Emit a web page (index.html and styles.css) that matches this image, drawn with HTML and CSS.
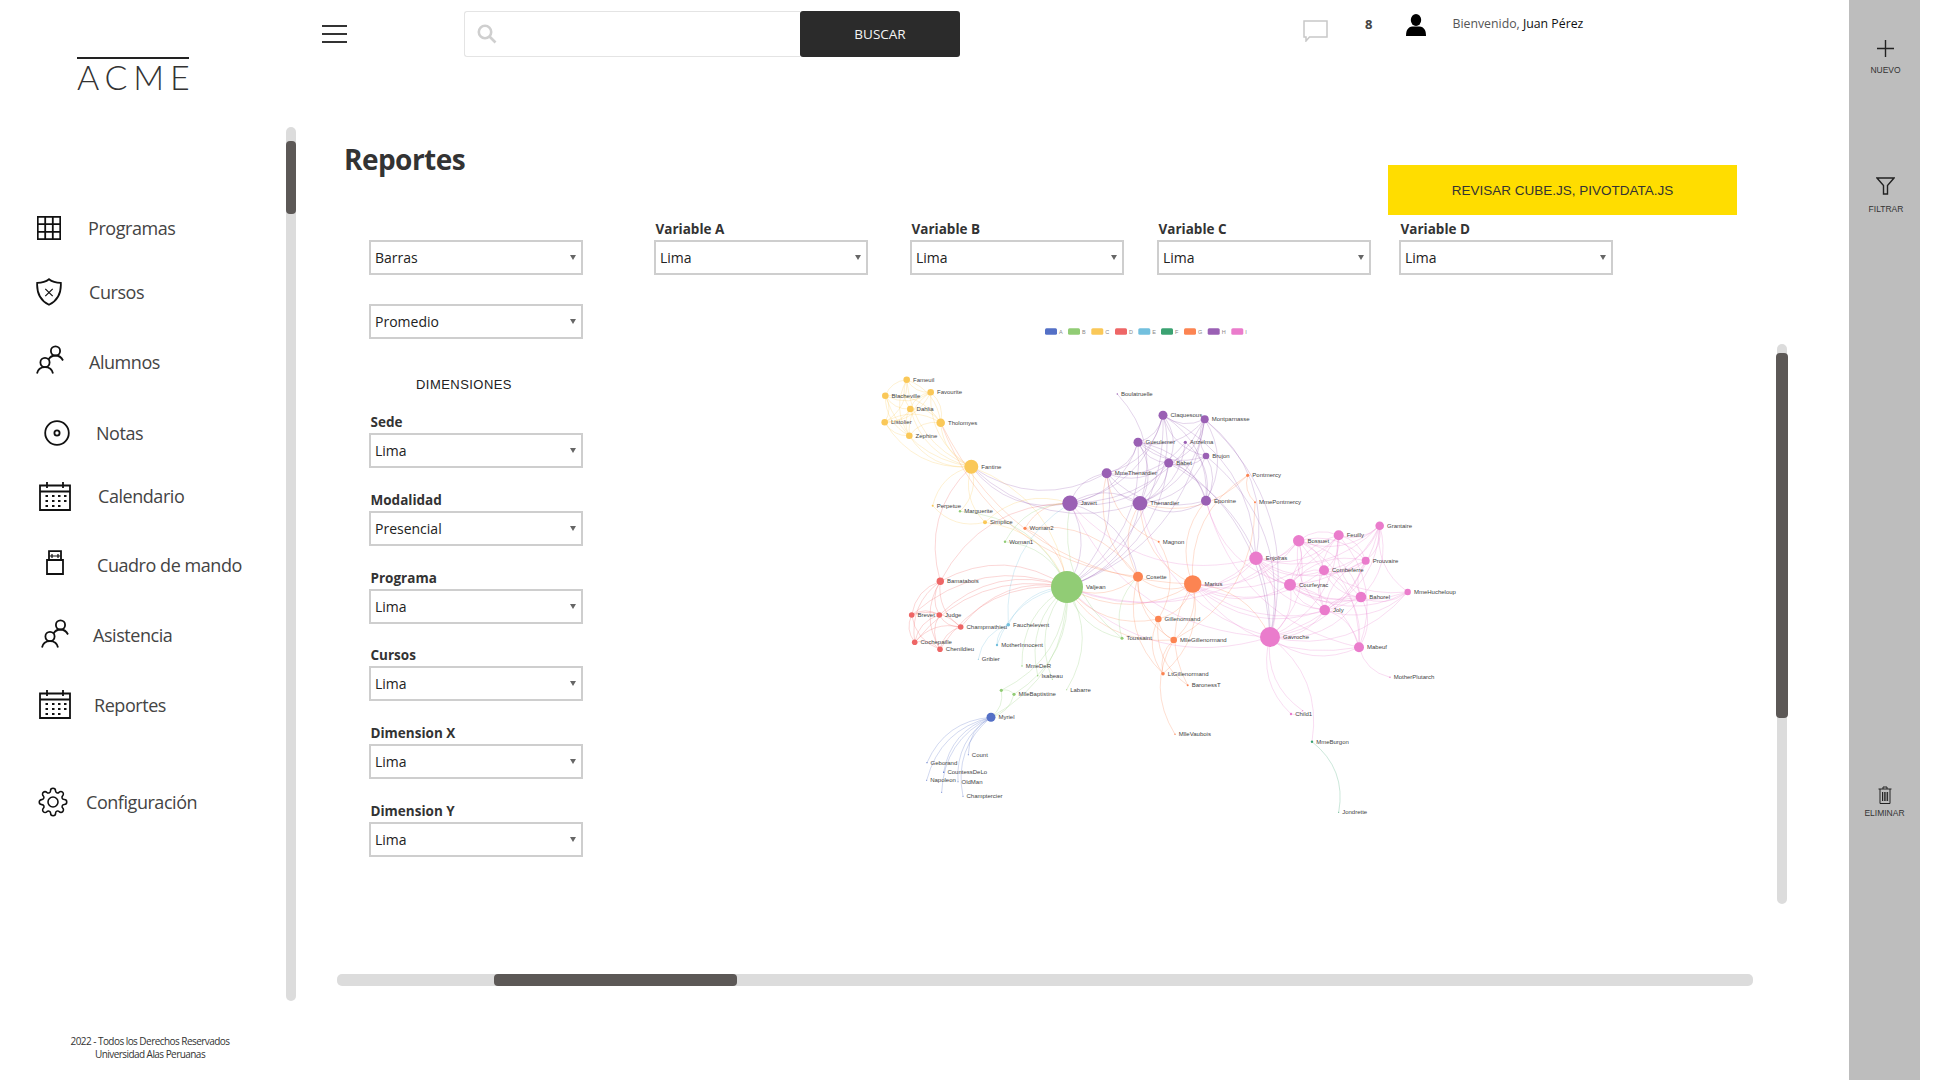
FILE: index.html
```html
<!DOCTYPE html>
<html lang="es">
<head>
<meta charset="utf-8">
<title>Reportes</title>
<link rel="stylesheet" href="styles.css">
</head>
<body>
<div class="app">
  <aside class="sidebar">
    <div class="logo"><span class="logo-text">ACME</span></div>
    <nav class="nav">
      <a class="nav-item nav-programas">
        <svg class="icon" width="24" height="24" viewBox="0 0 24 24"><path d="M.75.75h22.5v22.5H.75zM8.2.75v22.5M15.8.75v22.5M.75 8.2h22.5M.75 15.8h22.5"/></svg>
        <span class="nav-label">Programas</span>
      </a>
      <a class="nav-item nav-cursos">
        <svg class="icon" width="26" height="28" viewBox="0 0 26 28"><path d="M13 1.2C10 3.6 6 4.8 1.2 4.8c-.6 9.800 3 17.600 11.800 22 8.800-4.400 12.400-12.200 11.800-22C20 4.800 16 3.600 13 1.200z"/><path class="thin" d="M9.300 10.800l7.400 7.400M16.700 10.800l-7.400 7.400"/></svg>
        <span class="nav-label">Cursos</span>
      </a>
      <a class="nav-item nav-alumnos">
        <svg class="icon" width="28" height="30" viewBox="0 0 28 30"><circle cx="19.500" cy="6" r="4.600"/><path d="M12.500 14.500c1.500-2.600 3.900-4 7-4 3 0 5.700 1.500 7.500 5"/><circle cx="9" cy="17.500" r="4.600"/><path d="M1 28.500c.8-4 3.900-6.400 8-6.400s7.200 2.400 8 6.400"/></svg>
        <span class="nav-label">Alumnos</span>
      </a>
      <a class="nav-item nav-notas">
        <svg class="icon" width="26" height="26" viewBox="0 0 26 26"><circle cx="13" cy="13" r="11.800"/><circle cx="13" cy="13" r="2.600"/></svg>
        <span class="nav-label">Notas</span>
      </a>
      <a class="nav-item nav-calendario">
        <svg class="icon" width="32" height="30" viewBox="0 0 32 30"><use href="#calendar"/></svg>
        <span class="nav-label">Calendario</span>
      </a>
      <a class="nav-item nav-cuadro">
        <svg class="icon" width="18" height="25" viewBox="0 0 18 25"><path d="M3 10V1.200h12V10M1 10h16v14H1z"/><path class="thin" d="M6 4v4M12 4v4M3.500 6h11"/></svg>
        <span class="nav-label">Cuadro de mando</span>
      </a>
      <a class="nav-item nav-asistencia">
        <svg class="icon" width="28" height="30" viewBox="0 0 28 30"><circle cx="19.500" cy="6" r="4.600"/><path d="M12.500 14.500c1.500-2.600 3.900-4 7-4 3 0 5.700 1.500 7.500 5"/><circle cx="9" cy="17.500" r="4.600"/><path d="M1 28.500c.8-4 3.900-6.400 8-6.400s7.200 2.400 8 6.400"/></svg>
        <span class="nav-label">Asistencia</span>
      </a>
      <a class="nav-item nav-reportes">
        <svg class="icon" width="32" height="30" viewBox="0 0 32 30"><use href="#calendar"/></svg>
        <span class="nav-label">Reportes</span>
      </a>
      <a class="nav-item nav-config">
        <svg class="icon" width="30" height="30" viewBox="0 0 24 24"><circle class="gear" cx="12" cy="12" r="4"/><path class="gear" d="M19.400 15a1.650 1.650 0 0 0 .33 1.820l.06.06a2 2 0 0 1 0 2.830 2 2 0 0 1-2.830 0l-.06-.06a1.650 1.650 0 0 0-1.820-.33 1.650 1.650 0 0 0-1 1.510V21a2 2 0 0 1-2 2 2 2 0 0 1-2-2v-.09A1.650 1.650 0 0 0 9 19.400a1.650 1.650 0 0 0-1.820.33l-.06.06a2 2 0 0 1-2.830 0 2 2 0 0 1 0-2.830l.06-.06a1.650 1.650 0 0 0 .33-1.820 1.650 1.650 0 0 0-1.510-1H3a2 2 0 0 1-2-2 2 2 0 0 1 2-2h.09A1.650 1.650 0 0 0 4.600 9a1.650 1.650 0 0 0-.33-1.820l-.06-.06a2 2 0 0 1 0-2.830 2 2 0 0 1 2.830 0l.06.06a1.650 1.650 0 0 0 1.820.33H9a1.650 1.650 0 0 0 1-1.510V3a2 2 0 0 1 2-2 2 2 0 0 1 2 2v.09a1.650 1.650 0 0 0 1 1.510 1.650 1.650 0 0 0 1.820-.33l.06-.06a2 2 0 0 1 2.830 0 2 2 0 0 1 0 2.830l-.06.06a1.650 1.650 0 0 0-.33 1.820V9a1.650 1.650 0 0 0 1.510 1H21a2 2 0 0 1 2 2 2 2 0 0 1-2 2h-.09a1.650 1.650 0 0 0-1.510 1z"/></svg>
        <span class="nav-label">Configuración</span>
      </a>
    </nav>
    <footer class="copyright">
      <div>2022 - Todos los Derechos Reservados</div>
      <div>Universidad Alas Peruanas</div>
    </footer>
    <div class="vscroll vscroll-side"><div class="thumb thumb-side"></div></div>
  </aside>

  <main class="main">
    <header class="topbar">
      <button class="hamburger" aria-label="Menú"><span></span><span></span><span></span></button>
      <div class="search">
        <div class="search-box">
          <svg width="20" height="20" viewBox="0 0 20 20"><circle cx="8" cy="8" r="6.200"/><path d="M12.500 12.500l6 6"/></svg>
        </div>
        <button class="search-btn">BUSCAR</button>
      </div>
      <div class="user-area">
        <svg class="chat" width="25" height="22" viewBox="0 0 25 22"><path d="M1 1h23v16H6.500L3 21v-4H1z"/></svg>
        <span class="count">8</span>
        <svg class="user" width="20" height="22" viewBox="0 0 20 22"><ellipse cx="10" cy="6" rx="5.200" ry="6"/><path d="M0 22c0-6 2-9 6.500-9.500h7C18 13 20 16 20 22z"/></svg>
        <span class="welcome">Bienvenido, <b>Juan Pérez</b></span>
      </div>
    </header>

    <section class="report">
      <div class="report-head">
        <h1 class="title">Reportes</h1>
        <button class="review-btn">REVISAR CUBE.JS, PIVOTDATA.JS</button>
      </div>
      <div class="report-body">
        <div class="side-filters">
          <div class="field"><div class="field-label"></div><div class="select"><select><option>Barras</option></select></div></div>
          <div class="select select-gap"><select><option>Promedio</option></select></div>
          <h2 class="dim-title">DIMENSIONES</h2>
          <div class="dims">
            <div class="field"><label class="field-label">Sede</label><div class="select"><select><option>Lima</option></select></div></div>
            <div class="field"><label class="field-label">Modalidad</label><div class="select"><select><option>Presencial</option></select></div></div>
            <div class="field"><label class="field-label">Programa</label><div class="select"><select><option>Lima</option></select></div></div>
            <div class="field"><label class="field-label">Cursos</label><div class="select"><select><option>Lima</option></select></div></div>
            <div class="field"><label class="field-label">Dimension X</label><div class="select"><select><option>Lima</option></select></div></div>
            <div class="field"><label class="field-label">Dimension Y</label><div class="select"><select><option>Lima</option></select></div></div>
          </div>
        </div>
        <div class="chart-area">
          <div class="variables">
            <div class="field"><label class="field-label">Variable A</label><div class="select"><select><option>Lima</option></select></div></div>
            <div class="field"><label class="field-label">Variable B</label><div class="select"><select><option>Lima</option></select></div></div>
            <div class="field"><label class="field-label">Variable C</label><div class="select"><select><option>Lima</option></select></div></div>
            <div class="field"><label class="field-label">Variable D</label><div class="select"><select><option>Lima</option></select></div></div>
          </div>
          <svg id="graph" class="graph" width="900" height="510" viewBox="654 320 900 510"></svg>
        </div>
      </div>
    </section>

    <div class="vscroll vscroll-main"><div class="thumb thumb-main"></div></div>
    <div class="hscroll"><div class="thumb thumb-h"></div></div>
  </main>

  <aside class="actions">
    <a class="action action-new">
      <svg width="17" height="17" viewBox="0 0 17 17"><path d="M8.500 0v17M0 8.500h17"/></svg>
      <span>NUEVO</span>
    </a>
    <a class="action action-filter">
      <svg width="19" height="18" viewBox="0 0 19 18"><path d="M1 1h17l-6.500 7.500V17h-4V8.500z"/></svg>
      <span>FILTRAR</span>
    </a>
    <a class="action action-delete">
      <svg width="14" height="18" viewBox="0 0 14 18"><path d="M.5 3h13M2 3v14.500h10V3M5 3V1h4v2"/><path d="M4.500 6v9M6.300 6v9M7.900 6v9M9.600 6v9"/></svg>
      <span>ELIMINAR</span>
    </a>
  </aside>
</div>

<svg class="defs" width="0" height="0">
  <symbol id="calendar" viewBox="0 0 32 30">
    <path class="cal" d="M1 4.500h30v24.500H1zM1 10.500h30M8 1v6M24 1v6"/>
    <path class="cal-dots" d="M6.500 15h2.500M13 15h2.500M19 15h2.500M25 15h2.500M6.500 20h2.500M13 20h2.500M19 20h2.500M25 20h2.500M6.500 25h2.500M13 25h2.500M19 25h2.500"/>
  </symbol>
</svg>
<script src="graph.js"></script>
</body>
</html>
```
FILE: styles.css
```css
* { box-sizing: border-box; }
html, body { margin: 0; padding: 0; }
body {
  width: 1942px;
  height: 1080px;
  overflow: hidden;
  background: #fff;
  font-family: "Open Sans", "Noto Sans", sans-serif;
  color: #333;
}
.app { display: flex; width: 1942px; height: 1080px; }

/* sidebar */
.sidebar {
  position: relative;
  flex: 0 0 309px;
  display: flex;
  flex-direction: column;
  padding-top: 57px;
}
.logo {
  width: 112px;
  margin-left: 77px;
  border-top: 2px solid #222;
  height: 36px;
  overflow: visible;
}
.logo-text {
  display: block;
  font-family: "Lato", sans-serif;
  font-weight: 300;
  font-size: 34px;
  line-height: 34px;
  letter-spacing: 5.800px;
  color: #333;
  margin-top: 1px;
  white-space: nowrap;
}
.nav { display: flex; flex-direction: column; margin-top: 115px; }
.nav-item { display: flex; align-items: center; height: 40px; }
.nav-label { font-size: 18px; color: #444; letter-spacing: -.45px; white-space: nowrap; }
.icon { flex: none; fill: none; stroke: #111; stroke-width: 1.800; }
.icon .thin { stroke-width: 1.200; }
.icon .gear { stroke-width: 1.250; }
.nav-programas { padding-left: 37px; }
.nav-programas .nav-label { margin-left: 27px; }
.nav-cursos { padding-left: 36px; margin-top: 24px; }
.nav-cursos .nav-label { margin-left: 27px; }
.nav-alumnos { padding-left: 36px; margin-top: 30px; }
.nav-alumnos .icon { margin-top: -4px; }
.nav-alumnos .nav-label { margin-left: 25px; }
.nav-notas { padding-left: 44px; margin-top: 31px; }
.nav-notas .nav-label { margin-left: 26px; }
.nav-calendario { padding-left: 39px; margin-top: 23px; }
.nav-calendario .nav-label { margin-left: 27px; }
.nav-cuadro { padding-left: 46px; margin-top: 29px; }
.nav-cuadro .icon { margin-top: -5px; }
.nav-cuadro .nav-label { margin-left: 33px; }
.nav-asistencia { padding-left: 41px; margin-top: 30px; }
.nav-asistencia .icon { margin-top: -2px; }
.nav-asistencia .nav-label { margin-left: 24px; }
.nav-reportes { padding-left: 39px; margin-top: 30px; }
.nav-reportes .icon { margin-top: -2px; }
.nav-reportes .nav-label { margin-left: 23px; }
.nav-config { padding-left: 38px; margin-top: 57px; }
.nav-config .nav-label { margin-left: 18px; }
.icon use { fill: none; }
.defs { position: absolute; }
.cal { fill: none; stroke: #111; stroke-width: 1.800; }
.cal-dots { fill: none; stroke: #111; stroke-width: 2.200; }
.copyright {
  margin-top: auto;
  width: 300px;
  padding-bottom: 19px;
  text-align: center;
  font-size: 10px;
  line-height: 13px;
  letter-spacing: -.55px;
  color: #333;
}

/* scrollbars */
.vscroll { position: absolute; width: 10px; border-radius: 5px; background: #dcdcdc; }
.vscroll-side { left: 286px; top: 127px; height: 874px; }
.vscroll-main { left: 1468px; top: 344px; height: 560px; }
.thumb { position: absolute; background: #5c5856; border-radius: 4px; }
.thumb-side { left: 0; top: 14px; width: 10px; height: 73px; }
.thumb-main { left: -1px; top: 9px; width: 12px; height: 365px; }
.hscroll { position: absolute; left: 28px; top: 974px; width: 1416px; height: 12px; border-radius: 5px; background: #dcdcdc; }
.thumb-h { left: 157px; top: 0; width: 243px; height: 12px; }

/* main */
.main { position: relative; flex: 0 0 1540px; display: flex; flex-direction: column; }
.topbar { display: flex; align-items: flex-start; height: 141px; padding: 11px 0 0 13px; }
.hamburger {
  width: 25px; height: 18px; margin-top: 14px; padding: 0; border: 0; background: none;
  display: flex; flex-direction: column; justify-content: space-between;
}
.hamburger span { display: block; height: 2px; background: #333; }
.search { display: flex; margin-left: 117px; width: 496px; height: 46px; }
.search-box {
  flex: 1; border: 1px solid #e4e4e4; border-right: 0; border-radius: 3px 0 0 3px;
  padding: 12px 0 0 12px;
}
.search-box svg { display: block; fill: none; stroke: #cfcfcf; stroke-width: 2.600; }
.search-btn {
  flex: 0 0 160px; border: 0; border-radius: 3px; background: #2b2b2b; color: #f4f4f4;
  font-family: "Open Sans", sans-serif; font-size: 13.500px;
}
.user-area { display: flex; align-items: flex-start; margin-left: 343px; }
.chat { margin-top: 9px; fill: #fff; stroke: #c8c8c8; stroke-width: 1.500; }
.count { margin: 4px 0 0 37px; font-size: 13px; font-weight: 700; line-height: 18px; color: #444; }
.user { margin: 3px 0 0 34px; fill: #000; }
.welcome { margin: 4px 0 0 26px; font-size: 12.300px; line-height: 18px; color: #555; white-space: nowrap; }
.welcome b { font-weight: 400; color: #111; }

.report { display: flex; flex-direction: column; }
.report-head { display: flex; justify-content: space-between; align-items: flex-start; height: 81px; padding: 0 112px 0 35px; }
.title { margin: 0; font-size: 28px; line-height: 36px; font-weight: 700; color: #333; letter-spacing: -.55px; }
.review-btn {
  width: 349px; height: 50px; margin-top: 24px; border: 0; background: #ffdd00; color: #333;
  font-family: "Liberation Sans", sans-serif; font-size: 13.500px;
}
.report-body { display: grid; grid-template-columns: 285px 1fr; padding-left: 60px; }
.side-filters { display: flex; flex-direction: column; }
.field { display: flex; flex-direction: column; }
.field-label {
  display: block; height: 18px; padding-left: 1.500px; font-size: 13.500px; line-height: 14px; font-weight: 700; color: #333; white-space: nowrap;
}
.select { position: relative; width: 214px; height: 35px; }
.select::after {
  content: ""; position: absolute; right: 7px; top: 15px;
  border-left: 3.500px solid transparent; border-right: 3.500px solid transparent; border-top: 5px solid #666;
}
.select select {
  appearance: none; display: block; width: 100%; height: 100%; padding: 0 0 0 4px;
  background: #fff; border: 2px solid #cecece; border-radius: 0;
  font-family: "Open Sans", sans-serif; font-size: 14px; color: #222;
}
.select-gap { margin-top: 29px; }
.dim-title {
  margin: 37px 0 0; width: 190px; text-align: center; height: 17px; font-family: "Liberation Sans", sans-serif;
  font-size: 13px; line-height: 18px; font-weight: 400; letter-spacing: .45px; color: #222;
}
.dims { display: flex; flex-direction: column; gap: 24.800px; margin-top: 22px; }
.chart-area { display: flex; flex-direction: column; }
.variables { display: grid; grid-template-columns: 256px 247px 242px 214px; }
.graph { display: block; margin-top: 45px; }
.graph .label { font-family: "Liberation Sans", sans-serif; font-size: 6px; fill: #444; }
.graph .legend { font-family: "Liberation Sans", sans-serif; font-size: 5.500px; fill: #888; }
.graph .edge { fill: none; stroke-width: .7; stroke-opacity: .38; }

/* right panel */
.actions { flex: 0 0 71px; display: flex; flex-direction: column; align-items: center; background: #bdbdbd; }
.action { display: flex; flex-direction: column; align-items: center; font-family: "Liberation Sans", sans-serif; font-size: 8.500px; color: #333; }
.action svg { fill: none; stroke: #222; stroke-width: 1.400; }
.action-new { margin-top: 40px; gap: 8px; margin-left: 2px; }
.action-filter { margin-top: 102px; gap: 9px; margin-left: 3px; }
.action-delete { margin-top: 572px; gap: 4px; margin-left: 0; }
.action-delete svg { stroke-width: 1; }
```
FILE: graph.js
```js
var PALETTE = ['#5470c6', '#91cc75', '#fac858', '#ee6666', '#73c0de', '#3ba272', '#fc8452', '#9a60b4', '#ea7ccc'];
// name, x, y, radius, category, label hidden
var NODES = [
  ['Myriel',991,717.3,4.5,0],['Napoleon',926.7,780.3,.5,0],['CountessDeLo',943.7,772.3,.7,0],['Geborand',927,762.7,.6,0],
  ['Champtercier',963,796.3,.5,0],['Cravatte',941.7,792.3,.5,0,1],['Count',968.3,754.7,.5,0],['OldMan',958,781.7,.5,0],
  ['Valjean',1067,587,16,1],['Labarre',1066.7,689.7,.5,1],['Marguerite',960,511.3,1.2,1],['MmeDeR',1022,666,.7,1],
  ['Isabeau',1037.7,675.7,.7,1],['Gervais',1052.3,679.3,.5,1,1],['MlleBaptistine',1014,694.3,1.6,1],['MmeMagloire',1001.3,690.3,1.6,1,1],
  ['Woman1',1005,541.7,1.2,1],['Toussaint',1122,638.3,1.5,1],
  ['Tholomyes',940.7,422.7,4.3,2],['Listolier',884.7,422.3,3.3,2],['Fameuil',906.7,379.7,3.3,2],['Blacheville',885.3,395.7,3.3,2],
  ['Favourite',930.7,392.3,3.3,2],['Dahlia',910.3,409,3.3,2],['Zephine',909.3,435.7,3.3,2],['Fantine',971.3,466.7,7,2],
  ['Perpetue',932.7,505.7,1,2],['Simplice',985,522.3,2,2],
  ['Bamatabois',940.3,581.3,3.7,3],['Judge',939.3,615,2.8,3],['Champmathieu',960.7,627,2.8,3],['Brevet',911.7,615,2.8,3],
  ['Chenildieu',940,649.3,2.8,3],['Cochepaille',914.7,642.3,2.8,3],
  ['Fauchelevent',1008.3,624.7,1.8,4],['MotherInnocent',997,645,1.2,4],['Gribier',978.3,659.3,.5,4],
  ['MmeBurgon',1312,741.7,1.2,5],['Jondrette',1338.7,812.3,.5,5],
  ['Cosette',1138,576.7,5,6],['Woman2',1025,528.3,1.6,6],['Gillenormand',1158.3,619,3.3,6],['Magnon',1158.7,541.7,1,6],
  ['MlleGillenormand',1173.7,640,3.3,6],['MmePontmercy',1255,502.3,1,6],['MlleVaubois',1175,734.3,.7,6],['LtGillenormand',1163,673.7,1.8,6],
  ['Marius',1192.7,584,8.7,6],['BaronessT',1187.7,685.3,1,6],['Pontmercy',1247.7,475.3,1.6,6],
  ['Thenardier',1140,503.3,7.3,7],['MmeThenardier',1106.7,473.3,5,7],['Javert',1070,503.3,7.7,7],['Eponine',1206,500.7,5,7],
  ['Anzelma',1185.3,442.3,1.6,7],['Boulatruelle',1117.3,394,.7,7],['Gueulemer',1138,442.3,4.5,7],['Babet',1168.7,463,4.5,7],
  ['Claquesous',1163,415.3,4.5,7],['Montparnasse',1204.7,419.3,4,7],['Brujon',1206,456,3.3,7],
  ['Gavroche',1270,637,10,8],['Enjolras',1256,558.3,6.7,8],['Combeferre',1324,570.3,5,8],['Prouvaire',1365.7,560.7,4,8],
  ['Feuilly',1338.7,535.3,5,8],['Courfeyrac',1290,584.7,6,8],['Bahorel',1361,597,5.3,8],['Bossuet',1298.7,540.7,5.7,8],
  ['Joly',1324.7,610,5.3,8],['Grantaire',1379.7,525.7,4.3,8],['MotherPlutarch',1390,677.3,.7,8],['Mabeuf',1359,647.3,5,8],
  ['Child1',1291,714,1.2,8],['Child2',1302.7,710.7,.6,8,1],['MmeHucheloup',1407.7,592,3.2,8]
];
var LINKS = {
  Napoleon:'Myriel',MlleBaptistine:'Myriel',MmeMagloire:'Myriel MlleBaptistine',CountessDeLo:'Myriel',Geborand:'Myriel',Champtercier:'Myriel',
  Cravatte:'Myriel',Count:'Myriel',OldMan:'Myriel',
  Valjean:'Labarre MmeMagloire MlleBaptistine Myriel',Marguerite:'Valjean',MmeDeR:'Valjean',Isabeau:'Valjean',Gervais:'Valjean',
  Listolier:'Tholomyes',Fameuil:'Tholomyes Listolier',Blacheville:'Tholomyes Listolier Fameuil',Favourite:'Tholomyes Listolier Fameuil Blacheville',
  Dahlia:'Tholomyes Listolier Fameuil Blacheville Favourite',Zephine:'Tholomyes Listolier Fameuil Blacheville Favourite Dahlia',
  Fantine:'Tholomyes Listolier Fameuil Blacheville Favourite Dahlia Zephine Marguerite Valjean',
  MmeThenardier:'Fantine Valjean',Thenardier:'MmeThenardier Fantine Valjean',Cosette:'MmeThenardier Valjean Tholomyes Thenardier',
  Javert:'Valjean Fantine Thenardier MmeThenardier Cosette',Fauchelevent:'Valjean Javert',Bamatabois:'Fantine Javert Valjean',
  Perpetue:'Fantine',Simplice:'Perpetue Fantine Valjean Javert',Woman1:'Valjean Javert',Judge:'Valjean Bamatabois',
  Champmathieu:'Valjean Judge Bamatabois',Brevet:'Judge Champmathieu Valjean Bamatabois',Chenildieu:'Judge Champmathieu Brevet Valjean Bamatabois',
  Cochepaille:'Judge Champmathieu Brevet Chenildieu Valjean Bamatabois',Pontmercy:'Thenardier',Boulatruelle:'Thenardier',
  Eponine:'MmeThenardier Thenardier',Anzelma:'Eponine Thenardier MmeThenardier',Woman2:'Valjean Cosette Javert',
  MotherInnocent:'Fauchelevent Valjean',Gribier:'Fauchelevent',MmeBurgon:'Jondrette',Gavroche:'MmeBurgon Thenardier Javert Valjean',
  Gillenormand:'Cosette Valjean',Magnon:'Gillenormand MmeThenardier',MlleGillenormand:'Gillenormand Cosette Valjean',
  MmePontmercy:'MlleGillenormand Pontmercy',MlleVaubois:'MlleGillenormand',LtGillenormand:'MlleGillenormand Gillenormand Cosette',
  Marius:'MlleGillenormand Gillenormand Pontmercy LtGillenormand Cosette Valjean Tholomyes Thenardier Eponine Gavroche',
  BaronessT:'Gillenormand Marius',Mabeuf:'Marius Eponine Gavroche',Enjolras:'Marius Gavroche Javert Valjean',
  Combeferre:'Enjolras Mabeuf Marius',Prouvaire:'Gavroche Enjolras Combeferre',Feuilly:'Gavroche Enjolras Prouvaire Combeferre Mabeuf Marius',
  Courfeyrac:'Marius Enjolras Combeferre Gavroche Mabeuf Eponine Feuilly Prouvaire',
  Bahorel:'Combeferre Gavroche Courfeyrac Mabeuf Enjolras Feuilly Prouvaire Marius',
  Bossuet:'Marius Courfeyrac Gavroche Bahorel Enjolras Feuilly Prouvaire Combeferre Mabeuf Valjean',
  Joly:'Bahorel Bossuet Gavroche Courfeyrac Enjolras Feuilly Prouvaire Combeferre Mabeuf Marius',
  Grantaire:'Bossuet Enjolras Combeferre Courfeyrac Joly Gavroche Bahorel Feuilly Prouvaire',MotherPlutarch:'Mabeuf',
  Gueulemer:'Thenardier Valjean MmeThenardier Javert Gavroche Eponine',Babet:'Thenardier Gueulemer Valjean MmeThenardier Javert Gavroche Eponine',
  Claquesous:'Thenardier Babet Gueulemer Valjean MmeThenardier Javert Eponine Enjolras',
  Montparnasse:'Javert Babet Gueulemer Claquesous Valjean Gavroche Enjolras Thenardier Eponine',
  Toussaint:'Cosette Javert Valjean',Child1:'Gavroche',Child2:'Gavroche Child1',
  Brujon:'Babet Gueulemer Thenardier Gavroche Eponine Claquesous Montparnasse',
  MmeHucheloup:'Bossuet Joly Grantaire Bahorel Courfeyrac Gavroche Enjolras'
};
var SVG_NS = 'http://www.w3.org/2000/svg';
var svg = document.getElementById('graph');
function add(tag, attrs, text) {
  var el = document.createElementNS(SVG_NS, tag);
  for (var k in attrs) el.setAttribute(k, attrs[k]);
  if (text) el.textContent = text;
  svg.appendChild(el);
  return el;
}
var byName = {};
NODES.forEach(function (n) { byName[n[0]] = n; });
var CURVE = 0.3;
Object.keys(LINKS).forEach(function (src) {
  LINKS[src].split(' ').forEach(function (tgt) {
    var a = byName[src], b = byName[tgt];
    var cx = (a[1] + b[1]) / 2 - (a[2] - b[2]) * CURVE;
    var cy = (a[2] + b[2]) / 2 - (b[1] - a[1]) * CURVE;
    add('path', { 'class': 'edge', stroke: PALETTE[a[4]],
      d: 'M' + a[1] + ' ' + a[2] + 'Q' + cx.toFixed(1) + ' ' + cy.toFixed(1) + ' ' + b[1] + ' ' + b[2] });
  });
});
NODES.forEach(function (n) {
  add('circle', { cx: n[1], cy: n[2], r: n[3], fill: PALETTE[n[4]] });
  if (!n[5]) add('text', { 'class': 'label', x: n[1] + n[3] + 3, y: n[2] + 2 }, n[0]);
});
var LEGEND_X = [1045, 1068, 1091.3, 1115, 1138.3, 1161, 1184, 1207.7, 1231.3];
'ABCDEFGHI'.split('').forEach(function (letter, i) {
  add('rect', { x: LEGEND_X[i], y: 328.2, width: 12, height: 6.6, rx: 1.5, fill: PALETTE[i] });
  add('text', { 'class': 'legend', x: LEGEND_X[i] + 14, y: 333.5 }, letter);
});
```
